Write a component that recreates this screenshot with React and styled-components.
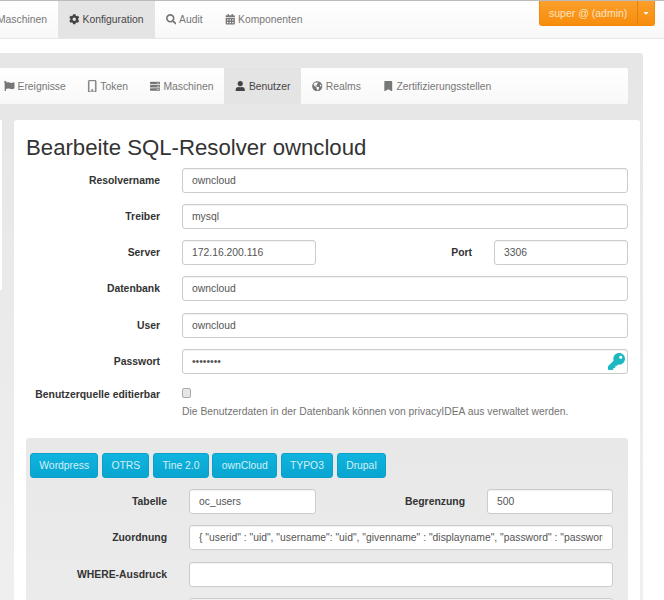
import React from "react";
import styled, { createGlobalStyle } from "styled-components";
import { FaCog, FaSearch, FaCalendarAlt, FaFlag, FaServer, FaUser, FaGlobeAmericas, FaBookmark, FaKey, FaCaretDown } from "react-icons/fa";
import { BsPhone } from "react-icons/bs";

const Global = createGlobalStyle`
  html, body { margin: 0; padding: 0; background: #fff; overflow: hidden; }
  body { width: 664px; height: 600px; font-family: "Liberation Sans", Arial, sans-serif; font-size: 10.35px; color: #333; }
  * { box-sizing: border-box; }
`;

const Navbar = styled.header`
  display: flex;
  align-items: stretch;
  height: 39px;
  border-top: 1px solid #bbb;
  border-bottom: 1px solid #e7e7e7;
  background: linear-gradient(#fff, #f8f8f8);
  padding-right: 9px;
`;
const MainNav = styled.nav`
  display: flex;
  margin-left: -14px;
  flex: 1;
`;
const NavItem = styled.a`
  display: flex;
  align-items: center;
  gap: 3px;
  padding: 0 11px;
  color: ${p => (p.$active ? "#444" : "#777")};
  background: ${p => (p.$active ? "#e4e4e4" : "transparent")};
  white-space: nowrap;
  height: 37px;
  svg { font-size: 10.5px; }
`;
const UserGroup = styled.div`
  display: flex;
  height: 25px;
  color: #fbe3c0;
  background: linear-gradient(#fb9f2c, #f78d0c);
  border: 1px solid #f08a0a;
  border-top: none;
  border-radius: 0 0 3px 3px;
`;
const UserName = styled.span`
  display: flex;
  align-items: center;
  padding: 0 9px;
  width: 97px;
  font-size: 10.5px;
`;
const UserCaret = styled.span`
  display: flex;
  align-items: center;
  justify-content: center;
  width: 17px;
  border-left: 1px solid #e48208;
  font-size: 8px;
  color: #fff;
`;

const Well = styled.main`
  margin: 14px 21px 0 -20px;
  padding: 14px 0 0 14px;
  background: linear-gradient(#e6e6e6, #f0f0f0);
  border-radius: 3px;
  height: 600px;
`;
const SubNav = styled.nav`
  display: flex;
  height: 38px;
  margin-right: 14px;
  background: linear-gradient(#fff, #f8f8f8);
  border: 1px solid #e7e7e7;
  border-radius: 3px;
`;
const SubItem = styled(NavItem)`
  height: 36px;
  padding: 0 11px;
  &:first-child { padding-left: 9px; }
`;
const PhoneIcon = styled(BsPhone)`
  && { font-size: 12.5px; }
  margin: 0 -1px 0 -2px;
  stroke: currentColor;
  stroke-width: 0.7px;
`;
const Columns = styled.div`
  display: flex;
  margin-top: 15px;
  align-items: flex-start;
`;
const Sidebar = styled.aside`
  width: 8px;
  height: 170px;
  background: #fff;
  flex: none;
  margin-right: 12px;
`;
const Panel = styled.section`
  flex: none;
  width: 626px;
  margin-right: 3px;
  padding: 0 12px;
  background: #fff;
  height: 600px;
  border-radius: 3px;
`;
const Title = styled.h2`
  margin: 0;
  padding-top: 14px;
  font-size: 22.2px;
  line-height: 27px;
  font-weight: 400;
  color: #333;
`;
const Form = styled.div`
  display: flex;
  flex-direction: column;
  gap: 11.3px;
  margin-top: 6.5px;
`;
const Row = styled.div`
  display: flex;
  align-items: center;
  gap: 22px;
`;
const Label = styled.label`
  flex: none;
  width: ${p => p.$w || 134}px;
  font-weight: 700;
  font-size: 10.4px;
  text-align: right;
  color: #333;
  white-space: nowrap;
`;
const Input = styled.div`
  flex: ${p => (p.$w ? "none" : 1)};
  width: ${p => (p.$w ? `${p.$w}px` : "auto")};
  min-width: 0;
  height: 25px;
  padding: 0 9px;
  display: flex;
  align-items: center;
  position: relative;
  background: #fff;
  border: 1px solid #ccc;
  border-radius: 3px;
  font-size: 10.35px;
  color: #555;
  white-space: nowrap;
  box-shadow: inset 0 1px 1px rgba(0,0,0,.06);
`;
const InputText = styled.span`
  display: block;
  min-width: 0;
  overflow: hidden;
`;
const KeyIcon = styled(FaKey)`
  position: absolute;
  right: 2px;
  top: 3px;
  font-size: 17px;
  color: #1cb8c2;
`;
const CheckRow = styled.div`
  display: flex;
  gap: 22px;
  margin-top: 1px;
`;
const CheckLabel = styled(Label)`
  padding-top: 3px;
`;
const CheckBody = styled.div`
  display: flex;
  flex-direction: column;
  gap: 7px;
`;
const Box = styled.span`
  width: 9px;
  height: 10px;
  border: 1px solid #aaa;
  border-radius: 2px;
  background: #e6e6e6;
  margin-top: 2px;
`;
const Help = styled.p`
  margin: 0;
  font-size: 10.35px;
  line-height: 14px;
  color: #737373;
`;
const InnerWell = styled.div`
  margin-top: 18.5px;
  padding: 15px 15px 0 4px;
  background: linear-gradient(#e8e8e8, #eeeeee);
  border-radius: 3px;
  height: 300px;
`;
const Presets = styled.div`
  display: flex;
  gap: 3.7px;
  margin-bottom: 11px;
`;
const Preset = styled.button`
  height: 25px;
  padding: 0 8.3px;
  font: 10.35px "Liberation Sans", Arial, sans-serif;
  color: #d4f0f8;
  background: linear-gradient(#10b4de, #08a5d0);
  border: 1px solid #0aa0c8;
  border-radius: 3px;
`;
const InnerForm = styled.div`
  display: flex;
  flex-direction: column;
  gap: 11.5px;
`;

const App = () => (
  <>
    <Global />
    <Navbar>
      <MainNav>
        <NavItem>Maschinen</NavItem>
        <NavItem $active><FaCog />Konfiguration</NavItem>
        <NavItem><FaSearch />Audit</NavItem>
        <NavItem><FaCalendarAlt />Komponenten</NavItem>
      </MainNav>
      <UserGroup>
        <UserName>super @ (admin)</UserName>
        <UserCaret><FaCaretDown /></UserCaret>
      </UserGroup>
    </Navbar>
    <Well>
      <SubNav>
        <SubItem><FaFlag />Ereignisse</SubItem>
        <SubItem><PhoneIcon />Token</SubItem>
        <SubItem><FaServer />Maschinen</SubItem>
        <SubItem $active><FaUser />Benutzer</SubItem>
        <SubItem><FaGlobeAmericas />Realms</SubItem>
        <SubItem><FaBookmark />Zertifizierungsstellen</SubItem>
      </SubNav>
      <Columns>
        <Sidebar />
        <Panel>
          <Title>Bearbeite SQL-Resolver owncloud</Title>
          <Form>
            <Row><Label>Resolvername</Label><Input>owncloud</Input></Row>
            <Row><Label>Treiber</Label><Input>mysql</Input></Row>
            <Row>
              <Label>Server</Label><Input $w={134}>172.16.200.116</Input>
              <Label>Port</Label><Input>3306</Input>
            </Row>
            <Row><Label>Datenbank</Label><Input>owncloud</Input></Row>
            <Row><Label>User</Label><Input>owncloud</Input></Row>
            <Row><Label>Passwort</Label><Input>••••••••<KeyIcon /></Input></Row>
            <CheckRow>
              <CheckLabel>Benutzerquelle editierbar</CheckLabel>
              <CheckBody>
                <Box />
                <Help>Die Benutzerdaten in der Datenbank können von privacyIDEA aus verwaltet werden.</Help>
              </CheckBody>
            </CheckRow>
          </Form>
          <InnerWell>
            <Presets>
              <Preset>Wordpress</Preset>
              <Preset>OTRS</Preset>
              <Preset>Tine 2.0</Preset>
              <Preset>ownCloud</Preset>
              <Preset>TYPO3</Preset>
              <Preset>Drupal</Preset>
            </Presets>
            <InnerForm>
              <Row>
                <Label $w={137}>Tabelle</Label><Input $w={127}>oc_users</Input>
                <Label $w={127}>Begrenzung</Label><Input>500</Input>
              </Row>
              <Row><Label $w={137}>Zuordnung</Label><Input><InputText>{'{ "userid" : "uid", "username": "uid", "givenname" : "displayname", "password" : "password"'}</InputText></Input></Row>
              <Row><Label $w={137}>WHERE-Ausdruck</Label><Input /></Row>
              <Row><Label $w={137}>&nbsp;</Label><Input /></Row>
            </InnerForm>
          </InnerWell>
        </Panel>
      </Columns>
    </Well>
  </>
);

export default App;
